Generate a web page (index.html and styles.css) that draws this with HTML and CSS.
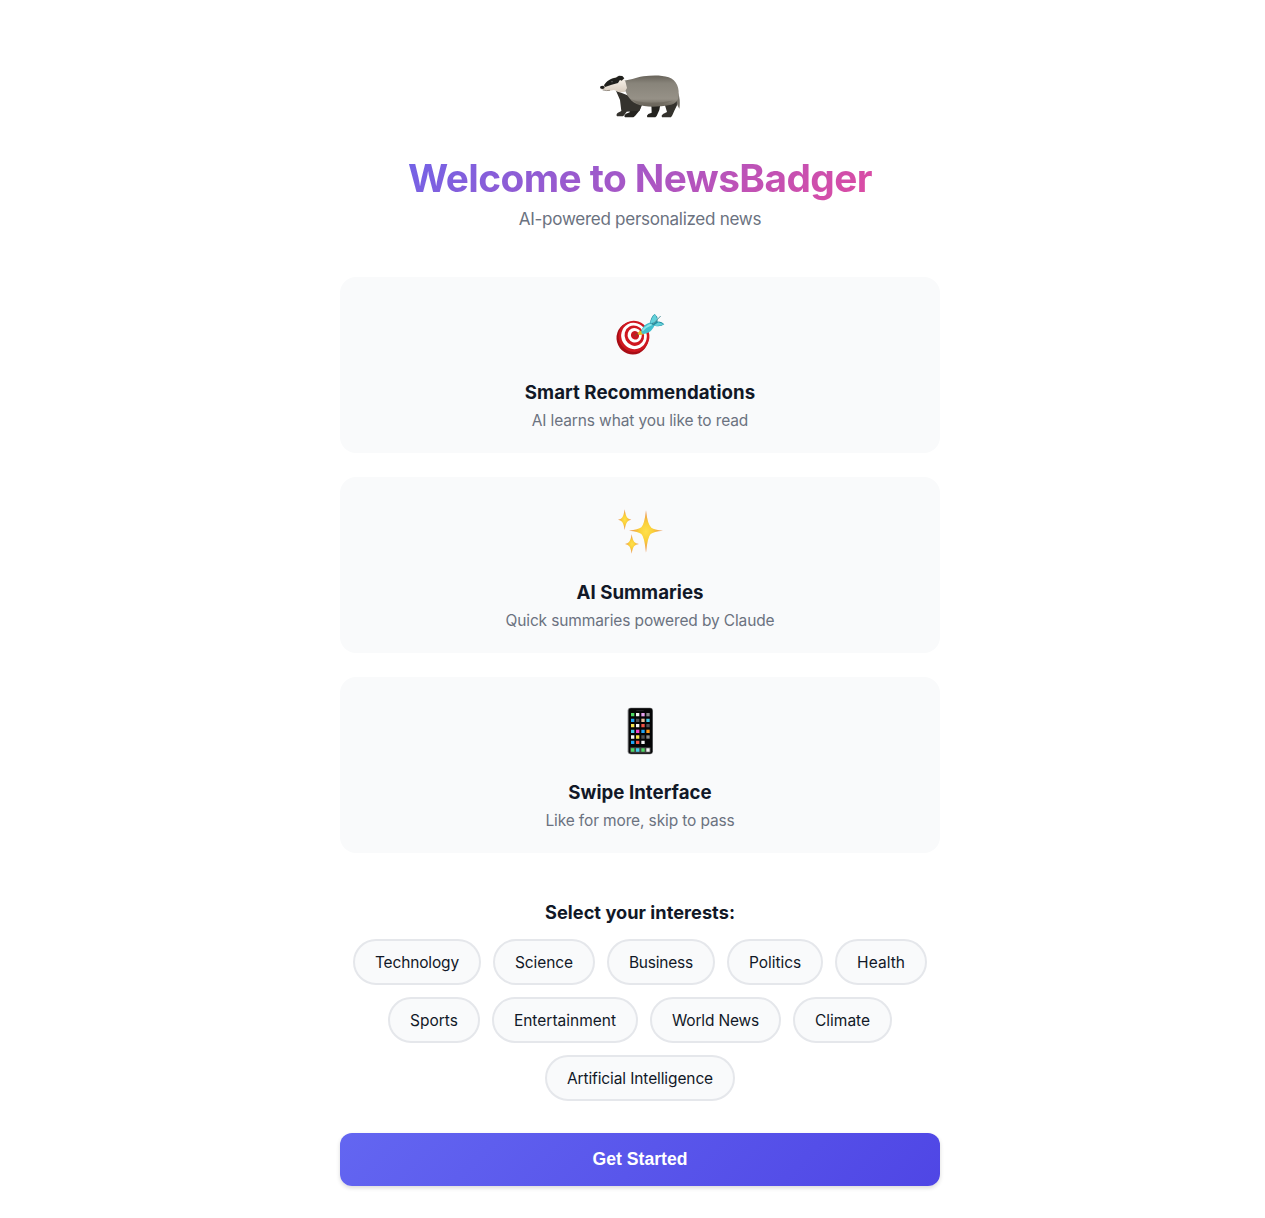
FILE: index.html
```html
<!DOCTYPE html>
<html lang="en">
<head>
<meta charset="utf-8">
<title>NewsBadger</title>
<link rel="stylesheet" href="styles.css">
</head>
<body>
<main class="onboarding">
  <header class="hero">
    <svg class="logo" viewBox="0 0 300 210" aria-hidden="true">
      <defs>
        <linearGradient id="fur" x1="0" y1="0" x2="0" y2="1"><stop offset="0" stop-color="#68635a"/><stop offset=".25" stop-color="#88847a"/><stop offset=".75" stop-color="#969187"/><stop offset="1" stop-color="#666157"/></linearGradient>
        <linearGradient id="face" x1="0" y1="0" x2="0" y2="1"><stop offset="0" stop-color="#fffaf2"/><stop offset="1" stop-color="#d8ccbe"/></linearGradient>
      </defs>
      <path d="M255 82c13 18 17 41 13 64-6-10-12-24-17-42z" fill="#77736a"/>
      <path d="M120 120l34 14-4 16-15 18-5 4h-25q-5-5 3-11l11-4zM184 130l28-2-4 22-8 18-4 4h-24q-4-5 3-10l10-4z" fill="#24231f"/>
      <path d="M78 92l50 20 28 24-8 16-22 2-16 1-7 10-4 4H81q-4-6 3-11l10-5-4-33zM222 126l38-14 1 24-8 16-6 14-4 6h-27q-4-5 3-10l12-6z" fill="#34322d"/>
      <path d="M97 62c22 0 38-9 63-13 28-4 54-4 76 3 24 9 34 32 29 62-3 13-14 19-26 21-37 7-75 7-99-3-24-12-35-34-43-70z" fill="url(#fur)"/>
      <path d="M112 112c24 18 78 20 136 10-31 15-77 19-105 9z" fill="#676258" opacity=".5"/>
      <path d="M32 83l16-15 24-16 20-4 14 16 5 20-7 12-16 1-16-7-16 3-24-5z" fill="url(#face)"/>
      <path d="M42 76c8-13 20-21 41-24l9 4-8 13-19 5-20 7zM79 52l8-5 10 1 6 7-8 7-11-5z" fill="#20201d"/>
      <ellipse cx="37" cy="82" rx="7" ry="5" fill="#1e1d1b"/><circle cx="66" cy="65" r="2" fill="#777"/>
      <path d="M38 90q12 3 22 1" fill="none" stroke="#746b60" stroke-width="2"/>
    </svg>
    <h1 class="hero-title">Welcome to NewsBadger</h1>
    <p class="hero-sub">AI-powered personalized news</p>
  </header>

  <section class="features">
    <article class="card">
      <svg class="card-icon" viewBox="0 0 240 210" aria-hidden="true">
        <ellipse cx="97" cy="115" rx="47" ry="49" transform="rotate(-25 97 115)" fill="#a80d15"/>
        <ellipse cx="102" cy="109" rx="46" ry="47" transform="rotate(-28 102 109)" fill="#cf1720"/>
        <ellipse cx="102" cy="108" rx="38" ry="40" transform="rotate(-28 102 108)" fill="#fff"/>
        <ellipse cx="103" cy="107" rx="29" ry="31" transform="rotate(-28 103 107)" fill="#cf1720"/>
        <ellipse cx="104" cy="106" rx="21" ry="22" transform="rotate(-28 104 106)" fill="#fff"/>
        <ellipse cx="105" cy="106" rx="12" ry="13" transform="rotate(-28 105 106)" fill="#c91922"/>
        <path d="M103 108l24-17" stroke="#755332" stroke-width="3"/>
        <path d="M119 92q10 0 14 11l-15 2-5-4z" fill="#e5bd23"/>
        <path d="M124 92c4-12 14-22 29-25l11 7c-5 16-17 26-35 28q-6-3-5-10z" fill="#42bfce"/>
        <path d="M150 71q1-19 14-29l8 9 1 14q11-2 20 8-11 8-27 5z" fill="#248fa2"/>
        <path d="M151 70q3-17 14-27l7 15-6 9zM162 76l13-9 17 6q-12 6-25 5z" fill="#64d1da"/>
        <path d="M127 92q12-14 28-19" stroke="#8be4e8" stroke-width="5" fill="none"/>
        <path d="M157 74l25-26" stroke="#5c989e" stroke-width="3"/>
      </svg>
      <h2 class="card-title">Smart Recommendations</h2>
      <p class="card-text">AI learns what you like to read</p>
    </article>
    <article class="card">
      <svg class="card-icon" viewBox="0 0 240 210" aria-hidden="true">
        <defs><radialGradient id="gold"><stop offset="0" stop-color="#ffe14b"/><stop offset=".4" stop-color="#fad03a"/><stop offset="1" stop-color="#e98a50"/></radialGradient></defs>
        <g fill="url(#gold)">
          <path d="M138 31q5 44 16 52 9 6 35 9-28 3-37 10-9 8-14 56-5-48-14-56-9-7-37-10 28-3 37-10 9-8 14-51z"/>
          <path d="M74 28q3 20 8 25 4 4 12 6-9 2-12 6-5 5-8 25-3-20-8-25-4-4-12-6 9-2 12-6 5-5 8-25z"/>
          <path d="M95 103q3 18 8 23 4 4 14 6-10 2-14 6-5 5-8 23-3-18-8-23-4-4-12-6 8-2 12-6 5-5 8-23z"/>
        </g>
      </svg>
      <h2 class="card-title">AI Summaries</h2>
      <p class="card-text">Quick summaries powered by Claude</p>
    </article>
    <article class="card">
      <svg class="card-icon" viewBox="0 0 240 210" aria-hidden="true">
        <rect x="83" y="23" width="76" height="140" rx="9" fill="#77787a"/>
        <rect x="86" y="25" width="71" height="136" rx="7" fill="#050506"/>
        <path d="M109 32h22" stroke="#242426" stroke-width="3"/>
        <rect x="90" y="142" width="62" height="16" rx="3" fill="#444"/>
        <path d="M93 39h10v10H93zM93 145h10v10H93zM124 145h10v10h-10z" fill="#4dd964"/>
        <path d="M108 39h10v10h-10zM108 72h10v10h-10zM93 106h10v10H93zM124 122h10v10h-10zM139 145h10v10h-10z" fill="#f3f3f3"/>
        <path d="M124 39h10v10h-10z" fill="#e5a1ed"/><path d="M139 39h10v10h-10z" fill="#8c8c8c"/>
        <path d="M93 56h10v10H93zM124 89h10v10h-10zM93 122h10v10H93z" fill="#20a4f5"/>
        <path d="M139 56h10v10h-10zM93 89h10v10H93zM108 145h10v10h-10z" fill="#42cbe9"/>
        <path d="M124 56h10v10h-10z" fill="#e5bf9a"/>
        <path d="M93 72h10v10H93zM108 106h10v10h-10z" fill="#f5e34f"/>
        <path d="M124 72h10v10h-10zM108 122h10v10h-10z" fill="#f05345"/>
        <path d="M108 89h10v10h-10z" fill="#ef42cc"/><path d="M139 89h10v10h-10z" fill="#ff9817"/>
        <path d="M108 56h10v10h-10zM139 72h10v10h-10zM124 106h10v10h-10z" fill="#505154"/><path d="M139 106h10v10h-10z" fill="#8b8b8b"/>
      </svg>
      <h2 class="card-title">Swipe Interface</h2>
      <p class="card-text">Like for more, skip to pass</p>
    </article>
  </section>

  <section class="interests">
    <h3 class="interests-title">Select your interests:</h3>
    <div class="chips">
      <button class="chip">Technology</button>
      <button class="chip">Science</button>
      <button class="chip">Business</button>
      <button class="chip">Politics</button>
      <button class="chip">Health</button>
      <button class="chip">Sports</button>
      <button class="chip">Entertainment</button>
      <button class="chip">World News</button>
      <button class="chip">Climate</button>
      <button class="chip">Artificial Intelligence</button>
    </div>
  </section>
  <button class="start">Get Started</button>
</main>
</body>
</html>
```
FILE: styles.css
```css
* { box-sizing: border-box; }
html { overflow: hidden; }
body {
  width: 1280px;
  margin: 0;
  background: #fff;
  color: #111827;
  font-family: Inter, "Liberation Sans", sans-serif;
}
h1, h2, h3, p { margin: 0; }
button { font-family: inherit; color: inherit; }
.onboarding {
  width: 600px;
  min-height: 1218px;
  margin: 0 auto;
  padding: 60px 0 32px;
}
.hero { display: flex; flex-direction: column; align-items: center; margin-bottom: 45px; }
.logo { display: block; width: 100px; height: 70px; }
.hero-title {
  width: 100%;
  margin-top: 24px;
  font-size: 38.8px;
  line-height: 48px;
  font-weight: 700;
  letter-spacing: -.57px;
  text-align: center;
  background: linear-gradient(135deg, #6366f1, #ec4899);
  -webkit-background-clip: text;
  background-clip: text;
  color: transparent;
}
.hero-sub { margin-top: 3px; font-size: 17.07px; line-height: 27px; letter-spacing: -.29px; color: #6b7280; }
.features { display: flex; flex-direction: column; gap: 24px; }
.card {
  display: flex;
  flex-direction: column;
  align-items: center;
  height: 176px;
  padding-top: 23px;
  border-radius: 16px;
  background: #f9fafb;
}
.card-icon { display: block; width: 80px; height: 70px; }
.card-title { margin-top: 10px; font-size: 18.65px; line-height: 24px; font-weight: 700; letter-spacing: .04px; }
.card-text { margin-top: 5px; font-size: 15.5px; line-height: 24px; letter-spacing: -.13px; color: #6b7280; }
.interests { margin-top: 48px; }
.interests-title { margin-bottom: 15px; font-size: 18.2px; line-height: 23px; font-weight: 700; letter-spacing: .03px; text-align: center; }
.chips { display: flex; flex-wrap: wrap; justify-content: center; gap: 12px; }
.chip {
  height: 46px;
  padding: 2px 20px 0;
  border: 2px solid #e5e7eb;
  border-radius: 24px;
  background: #f9fafb;
  font-size: 15.5px;
  line-height: 24px;
}
.chip:nth-child(1) { letter-spacing: -.16px; }
.chip:nth-child(2) { letter-spacing: -.09px; }
.chip:nth-child(3) { letter-spacing: -.22px; }
.chip:nth-child(4) { letter-spacing: -.05px; }
.chip:nth-child(5) { letter-spacing: .05px; }
.chip:nth-child(8) { letter-spacing: -.18px; }
.chip:nth-child(10) { letter-spacing: -.11px; }
.start {
  display: block;
  width: 100%;
  height: 53px;
  margin-top: 32px;
  border: 0;
  border-radius: 12px;
  background: linear-gradient(135deg, #6366f1, #4f46e5);
  box-shadow: 0 2px 4px rgba(0, 0, 0, .15);
  color: #fff;
  font: 700 17.6px/21px "Liberation Sans", Arial, sans-serif;
}
```
